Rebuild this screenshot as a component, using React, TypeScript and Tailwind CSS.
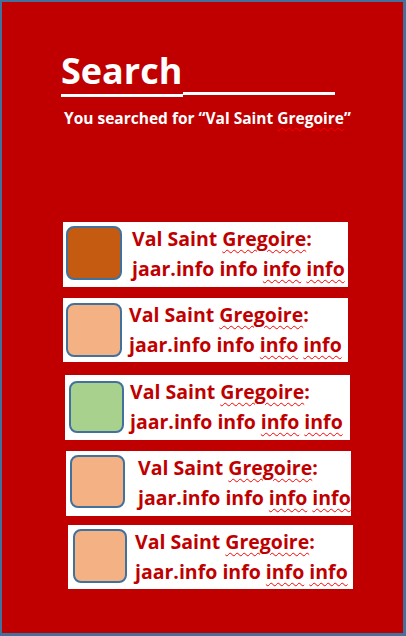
import React from "react";

type Card = {
  ml: string;
  mt: string;
  h: string;
  shapeMl: string;
  shapeMt: string;
  shapeW: string;
  shapeH: string;
  gap: string;
  color: string;
};

const cards: Card[] = [
  { ml: "ml-[61px]", mt: "mt-[0px]", h: "h-[65px]", shapeMl: "ml-[3px]", shapeMt: "mt-[4px]", shapeW: "w-[56px]", shapeH: "h-[54px]", gap: "ml-[10px]", color: "bg-[#c55a11]" },
  { ml: "ml-[61px]", mt: "mt-[11px]", h: "h-[64px]", shapeMl: "ml-[3px]", shapeMt: "mt-[5px]", shapeW: "w-[56px]", shapeH: "h-[54px]", gap: "ml-[7px]", color: "bg-[#f4b183]" },
  { ml: "ml-[63px]", mt: "mt-[13px]", h: "h-[65px]", shapeMl: "ml-[4px]", shapeMt: "mt-[6px]", shapeW: "w-[55px]", shapeH: "h-[52px]", gap: "ml-[6px]", color: "bg-[#a9d18e]" },
  { ml: "ml-[64px]", mt: "mt-[11px]", h: "h-[65px]", shapeMl: "ml-[4px]", shapeMt: "mt-[4px]", shapeW: "w-[55px]", shapeH: "h-[53px]", gap: "ml-[13px]", color: "bg-[#f4b183]" },
  { ml: "ml-[66px]", mt: "mt-[9px]", h: "h-[64px]", shapeMl: "ml-[5px]", shapeMt: "mt-[4px]", shapeW: "w-[54px]", shapeH: "h-[54px]", gap: "ml-[8px]", color: "bg-[#f4b183]" },
];

const squig = "underline decoration-wavy decoration-[#ff0000] decoration-[1px] underline-offset-[3px]";

export default function App() {
  return (
    <div
      className="w-[406px] h-[636px] bg-[#41719c] pt-[2px] pl-[2px] pr-[3px] pb-[3px]"
      style={{ fontFamily: "'Open Sans', sans-serif" }}
    >
      <div className="w-full h-full bg-[#c00000] flex flex-col">
        <div className="ml-[59px] mt-[46px] flex items-end">
          <div className="text-white font-bold text-[36px] leading-[46px] border-b-[3px] border-white pr-[1px]">
            Search
          </div>
          <div className="w-[152px] border-b-[3px] border-white mb-[2px]" />
        </div>
        <div className="ml-[62px] mt-[11px] text-white font-bold text-[15.5px] leading-[20px] whitespace-nowrap">
          You searched for “Val Saint <span className={squig}>Gregoire</span>”
        </div>
        <div className="mt-[94px] flex flex-col">
          {cards.map((c, i) => (
            <div key={i} className={`${c.ml} ${c.mt} ${c.h} w-[285px] bg-white flex items-start`}>
              <div
                className={`${c.shapeMl} ${c.shapeMt} ${c.shapeW} ${c.shapeH} ${c.color} border-2 border-[#41719c] rounded-[8px] shrink-0`}
              />
              <div className={`${c.gap} mt-[2px] text-[#c00000] font-bold text-[19.5px] leading-[30px] whitespace-nowrap`}>
                <div>
                  Val Saint <span className={squig}>Gregoire</span>:
                </div>
                <div>
                  jaar.info info <span className={squig}>info</span> <span className={squig}>info</span>
                </div>
              </div>
            </div>
          ))}
        </div>
      </div>
    </div>
  );
}
